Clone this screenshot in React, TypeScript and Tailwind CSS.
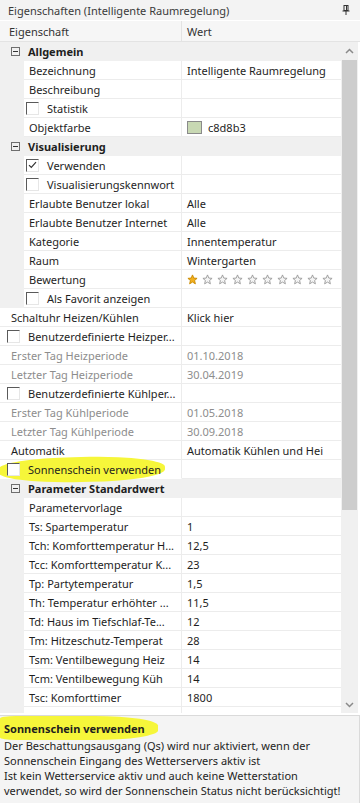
import type { ReactNode } from "react";

type Row =
  | { kind: "group"; label: string }
  | {
      kind: "item";
      label: string;
      value?: ReactNode;
      indent?: boolean;
      check?: "on" | "off";
      muted?: boolean;
      mark?: boolean;
    };

function Stars() {
  return (
    <div className="flex items-center gap-[4px]">
      {Array.from({ length: 10 }).map((_, i) => (
        <svg key={i} width="11" height="11" viewBox="0 0 24 24">
          <path
            d="M12 2l2.9 6.9 7.1.6-5.4 4.7 1.7 7.3L12 17.6 5.7 21.5l1.7-7.3L2 9.5l7.1-.6z"
            fill={i === 0 ? "#f2b01e" : "#f4f4f4"}
            stroke={i === 0 ? "#c98a00" : "#9a9a9a"}
            strokeWidth="2"
          />
        </svg>
      ))}
    </div>
  );
}

const rows: Row[] = [
  { kind: "group", label: "Allgemein" },
  { kind: "item", label: "Bezeichnung", value: "Intelligente Raumregelung", indent: true },
  { kind: "item", label: "Beschreibung", indent: true },
  { kind: "item", label: "Statistik", indent: true, check: "off" },
  {
    kind: "item",
    label: "Objektfarbe",
    indent: true,
    value: (
      <span className="flex items-center gap-[6px]">
        <span className="w-[15px] h-[13px] border border-[#8a8a8a] bg-[#c8d8b3]" />
        c8d8b3
      </span>
    ),
  },
  { kind: "group", label: "Visualisierung" },
  { kind: "item", label: "Verwenden", indent: true, check: "on" },
  { kind: "item", label: "Visualisierungskennwort", indent: true, check: "off" },
  { kind: "item", label: "Erlaubte Benutzer lokal", value: "Alle", indent: true },
  { kind: "item", label: "Erlaubte Benutzer Internet", value: "Alle", indent: true },
  { kind: "item", label: "Kategorie", value: "Innentemperatur", indent: true },
  { kind: "item", label: "Raum", value: "Wintergarten", indent: true },
  { kind: "item", label: "Bewertung", value: <Stars />, indent: true },
  { kind: "item", label: "Als Favorit anzeigen", indent: true, check: "off" },
  { kind: "item", label: "Schaltuhr Heizen/Kühlen", value: "Klick hier" },
  { kind: "item", label: "Benutzerdefinierte Heizper...", check: "off" },
  { kind: "item", label: "Erster Tag Heizperiode", value: "01.10.2018", muted: true },
  { kind: "item", label: "Letzter Tag Heizperiode", value: "30.04.2019", muted: true },
  { kind: "item", label: "Benutzerdefinierte Kühlper...", check: "off" },
  { kind: "item", label: "Erster Tag Kühlperiode", value: "01.05.2018", muted: true },
  { kind: "item", label: "Letzter Tag Kühlperiode", value: "30.09.2018", muted: true },
  { kind: "item", label: "Automatik", value: "Automatik Kühlen und Hei" },
  { kind: "item", label: "Sonnenschein verwenden", check: "off", mark: true },
  { kind: "group", label: "Parameter Standardwert" },
  { kind: "item", label: "Parametervorlage", indent: true },
  { kind: "item", label: "Ts: Spartemperatur", value: "1", indent: true },
  { kind: "item", label: "Tch: Komforttemperatur H...", value: "12,5", indent: true },
  { kind: "item", label: "Tcc: Komforttemperatur K...", value: "23", indent: true },
  { kind: "item", label: "Tp: Partytemperatur", value: "1,5", indent: true },
  { kind: "item", label: "Th: Temperatur erhöhter ...", value: "11,5", indent: true },
  { kind: "item", label: "Td: Haus im Tiefschlaf-Te...", value: "12", indent: true },
  { kind: "item", label: "Tm: Hitzeschutz-Temperat", value: "28", indent: true },
  { kind: "item", label: "Tsm: Ventilbewegung Heiz", value: "14", indent: true },
  { kind: "item", label: "Tcm: Ventilbewegung Küh", value: "14", indent: true },
  { kind: "item", label: "Tsc: Komforttimer", value: "1800", indent: true },
  { kind: "item", label: "Tss: Sonnenschein-Timer", value: "1800", indent: true },
];

function CheckBox({ on }: { on: boolean }) {
  return (
    <span className="w-[13px] h-[13px] shrink-0 border-t border-l border-[#5a5a5a] border-r border-b border-r-[#e6e6e6] border-b-[#e6e6e6] bg-white flex items-center justify-center">
      {on && (
        <svg width="9" height="8" viewBox="0 0 9 8">
          <path d="M1 4.2l2.3 2.3L8 1.2" fill="none" stroke="#333" strokeWidth="1.2" />
        </svg>
      )}
    </span>
  );
}

function GroupRow({ label }: { label: string }) {
  return (
    <div className="flex h-[19px] items-center bg-[#f0f0f0]">
      <span className="ml-[11px] w-[9px] h-[9px] border border-[#6e6e6e] flex items-center justify-center">
        <span className="w-[5px] h-px bg-[#333]" />
      </span>
      <span className="ml-2 font-bold text-[#1e1e1e]">{label}</span>
    </div>
  );
}

function ItemRow({ r }: { r: Extract<Row, { kind: "item" }> }) {
  const color = r.muted ? "text-[#8d8d8d]" : "text-[#1e1e1e]";
  return (
    <div className="relative flex h-[19px]">
      {r.mark && (
        <div className="absolute left-[-2px] top-[-3px] w-[167px] h-[25px] bg-[#f6f63a] rounded-[45%] -rotate-1" />
      )}
      {r.indent && <div className="w-6 shrink-0 bg-[#f0f0f0]" />}
      <div
        className={`relative flex items-center overflow-hidden whitespace-nowrap border-b border-r border-[#ececec] ${color} ${
          r.indent ? "w-[158px]" : "w-[182px]"
        } ${r.check ? (r.indent ? "pl-[2px]" : "pl-[7px]") : r.indent ? "pl-[5px]" : "pl-[11px]"} ${
          r.mark ? "border-b-transparent" : ""
        }`}
      >
        {r.check && <CheckBox on={r.check === "on"} />}
        <span className={r.check ? "ml-2" : ""}>{r.label}</span>
      </div>
      <div
        className={`flex-1 flex items-center overflow-hidden whitespace-nowrap pl-[5px] border-b border-[#ececec] ${color}`}
      >
        {r.value}
      </div>
    </div>
  );
}

function Chevron({ up }: { up?: boolean }) {
  return (
    <svg width="9" height="6" viewBox="0 0 9 6">
      <path d={up ? "M1 5l3.5-3.5L8 5" : "M1 1l3.5 3.5L8 1"} fill="none" stroke="#8a8a8a" strokeWidth="1.5" />
    </svg>
  );
}

export default function App() {
  return (
    <div
      className="w-[360px] h-[803px] flex flex-col overflow-hidden bg-white text-[11px] leading-[15px] text-[#1e1e1e]"
      style={{ fontFamily: '"Noto Sans", "Open Sans", sans-serif' }}
    >
      <div className="h-5 shrink-0 flex items-center justify-between bg-[#f3f3f3] pl-2 pr-[10px] text-[#3a3a3a]">
        <span>Eigenschaften (Intelligente Raumregelung)</span>
        <svg width="8" height="10" viewBox="0 0 8 10">
          <rect x="2" y="0.5" width="4" height="5" fill="none" stroke="#333" />
          <path d="M0.5 6h7M4 6v4" stroke="#333" />
          <path d="M4.5 1v4" stroke="#333" />
        </svg>
      </div>

      <div className="h-[22px] shrink-0 flex border-t border-b border-t-white border-b-[#e3e3e3] bg-[#f6f6f6] text-[#333]">
        <div className="w-[182px] flex items-center pl-[9px] border-r border-[#e3e3e3]">Eigenschaft</div>
        <div className="flex-1 flex items-center pl-[5px]">Wert</div>
      </div>

      <div className="h-[671px] shrink-0 flex">
        <div className="flex-1 overflow-hidden">
          {rows.map((r, i) =>
            r.kind === "group" ? <GroupRow key={i} label={r.label} /> : <ItemRow key={i} r={r} />
          )}
        </div>
        <div className="w-[17px] flex flex-col bg-[#f0f0f0]">
          <div className="h-[18px] flex items-center justify-center">
            <Chevron up />
          </div>
          <div className="h-[450px] mx-[1px] bg-[#cdcdcd]" />
          <div className="flex-1" />
          <div className="h-[17px] flex items-center justify-center">
            <Chevron />
          </div>
        </div>
        <div className="w-[2px]" />
      </div>

      <div className="h-[2px] shrink-0" />

      <div className="flex-1 relative bg-[#f4f4f4] border-t border-r border-[#dadada] px-1 pt-[5px] whitespace-nowrap">
        <div className="absolute left-0 top-0 w-[158px] h-[24px] bg-[#f6f63a] rounded-r-[40%] rounded-l-[10%]" />
        <div className="relative font-bold text-[#1e1e1e]">Sonnenschein verwenden</div>
        <div className="relative mt-[2px] text-[#1e1e1e]">
          Der Beschattungsausgang (Qs) wird nur aktiviert, wenn der
          <br />
          Sonnenschein Eingang des Wetterservers aktiv ist
          <br />
          Ist kein Wetterservice aktiv und auch keine Wetterstation
          <br />
          verwendet, so wird der Sonnenschein Status nicht berücksichtigt!
        </div>
      </div>
    </div>
  );
}
